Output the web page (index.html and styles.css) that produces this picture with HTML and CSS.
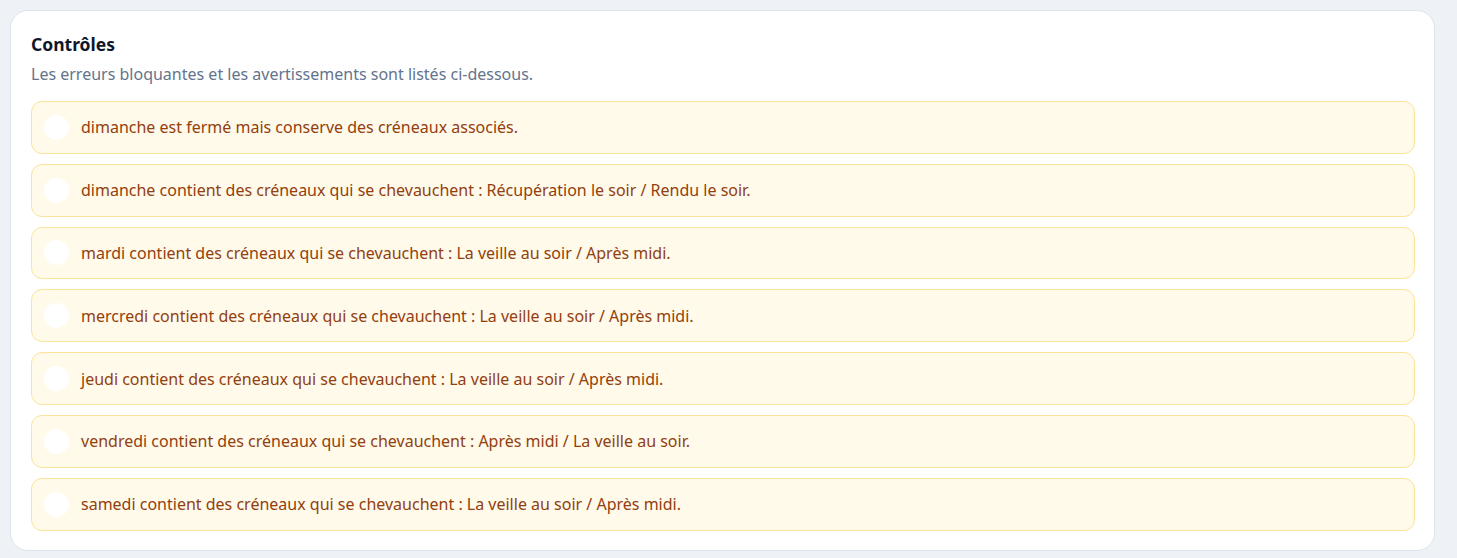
FILE: index.html
```html
<!DOCTYPE html>
<html lang="fr">
<head>
  <meta charset="UTF-8">
  <title>Contrôles</title>
  <link rel="stylesheet" href="styles.css">
</head>
<body>

  <div class="card">
    <h2 class="card-title">Contrôles</h2>
    <p class="card-sub">Les erreurs bloquantes et les avertissements sont listés ci-dessous.</p>

    <ul class="checks">
      <li class="check"><span class="dot"></span>dimanche est fermé mais conserve des créneaux associés.</li>
      <li class="check"><span class="dot"></span>dimanche contient des créneaux qui se chevauchent : Récupération le soir / Rendu le soir.</li>
      <li class="check"><span class="dot"></span>mardi contient des créneaux qui se chevauchent : La veille au soir / Après midi.</li>
      <li class="check"><span class="dot"></span>mercredi contient des créneaux qui se chevauchent : La veille au soir / Après midi.</li>
      <li class="check"><span class="dot"></span>jeudi contient des créneaux qui se chevauchent : La veille au soir / Après midi.</li>
      <li class="check"><span class="dot"></span>vendredi contient des créneaux qui se chevauchent : Après midi / La veille au soir.</li>
      <li class="check"><span class="dot"></span>samedi contient des créneaux qui se chevauchent : La veille au soir / Après midi.</li>
    </ul>
  </div>

</body>
</html>
```

FILE: styles.css
```css
body {
  margin: 0;
  padding: 10px;
  background: #eef1f5;
  font-family: 'Noto Sans', sans-serif;
  color: #0f172a;
}
.card {
  width: 1425px;
  box-sizing: border-box;
  background: #fff;
  border: 1px solid #dde3ec;
  border-radius: 18px;
  padding: 20px 19px 19px 20px;
}
.card-title {
  margin: 0;
  font-size: 17.5px;
  line-height: 26px;
  font-weight: 700;
  color: #0f172a;
}
.card-sub {
  margin: 6px 0 16px;
  font-size: 16px;
  line-height: 22px;
  color: #64748b;
}
.checks {
  list-style: none;
  margin: 0;
  padding: 0;
  display: flex;
  flex-direction: column;
  gap: 10px;
}
.check {
  display: flex;
  align-items: center;
  gap: 12px;
  height: 52.8px;
  box-sizing: border-box;
  padding: 0 12px;
  background: #fffaea;
  border: 1px solid #fbe49a;
  border-radius: 11px;
  font-size: 16px;
  color: #92400e;
}
.dot {
  width: 25px;
  height: 25px;
  border-radius: 50%;
  background: #fff;
  flex: none;
}
```
